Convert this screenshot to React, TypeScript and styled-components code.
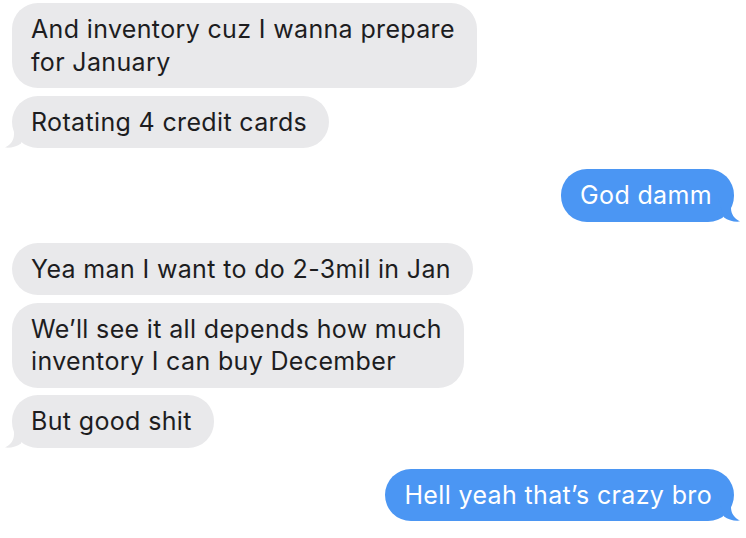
import React, { FC } from 'react';
import styled, { createGlobalStyle } from 'styled-components';

type Message = {
  id: number;
  mine: boolean;
  lines: string[];
  tail?: boolean;
};

const messages: Message[] = [
  { id: 1, mine: false, lines: ['And inventory cuz I wanna prepare', 'for January'] },
  { id: 2, mine: false, lines: ['Rotating 4 credit cards'], tail: true },
  { id: 3, mine: true, lines: ['God damm'], tail: true },
  { id: 4, mine: false, lines: ['Yea man I want to do 2-3mil in Jan'] },
  {
    id: 5,
    mine: false,
    lines: ['We\u2019ll see it all depends how much', 'inventory I can buy December'],
  },
  { id: 6, mine: false, lines: ['But good shit'], tail: true },
  { id: 7, mine: true, lines: ['Hell yeah that\u2019s crazy bro'], tail: true },
];

const GREY = '#e9e9eb';
const BLUE = '#4b96f3';

const Tail: FC<{ mine: boolean }> = ({ mine }) => (
  <StyledTail mine={mine} width="22" height="24" viewBox="0 0 22 24">
    <path
      d="M9,0 L9,10 C9,16 6,20.5 0,23.6 C6,24.2 12,22.6 16,19.5 L22,0 Z"
      fill={mine ? BLUE : GREY}
    />
  </StyledTail>
);

const App: FC = () => {
  return (
    <>
      <GlobalStyle />
      <StyledThread>
        {messages.map((m, i) => {
          const prev = messages[i - 1];
          const switched = prev !== undefined && prev.mine !== m.mine;
          return (
            <StyledRow key={m.id} mine={m.mine} switched={switched}>
              <StyledBubble mine={m.mine}>
                {m.lines.map((line) => (
                  <StyledLine key={line}>{line}</StyledLine>
                ))}
                {m.tail && <Tail mine={m.mine} />}
              </StyledBubble>
            </StyledRow>
          );
        })}
      </StyledThread>
    </>
  );
};

export default App;

const GlobalStyle = createGlobalStyle`
  html, body {
    margin: 0;
    padding: 0;
    background: #ffffff;
  }

  body {
    font-family: Inter, "Noto Sans", "Liberation Sans", sans-serif;
    -webkit-font-smoothing: antialiased;
  }
`;

const StyledThread = styled.div`
  display: flex;
  flex-direction: column;
  padding: 3px 12px 0 12px;
  width: 746px;
  box-sizing: border-box;
`;

const StyledRow = styled.div<{ mine: boolean; switched: boolean }>`
  display: flex;
  justify-content: ${(p) => (p.mine ? 'flex-end' : 'flex-start')};
  margin-top: ${(p) => (p.switched ? '21px' : '7.5px')};

  &:first-child {
    margin-top: 0;
  }
`;

const StyledBubble = styled.div<{ mine: boolean }>`
  position: relative;
  display: flex;
  flex-direction: column;
  padding: 10px 22px 10px 19px;
  border-radius: 26px;
  background: ${(p) => (p.mine ? BLUE : GREY)};
  color: ${(p) => (p.mine ? '#ffffff' : '#1d1d1f')};
  font-size: 25px;
  line-height: 32.5px;
  letter-spacing: 0.35px;
`;

const StyledLine = styled.span`
  white-space: nowrap;
  position: relative;
  z-index: 1;
`;

const StyledTail = styled.svg<{ mine: boolean }>`
  position: absolute;
  bottom: 0;
  ${(p) => (p.mine ? 'right: -6px; transform: scaleX(-1);' : 'left: -7px;')}
`;
